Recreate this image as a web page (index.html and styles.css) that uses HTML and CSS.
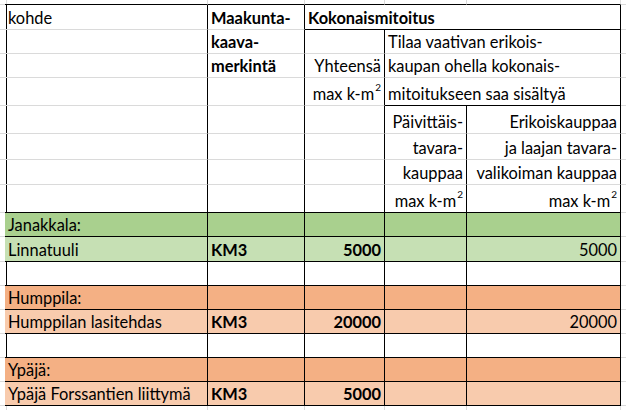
FILE: index.html
```html
<!DOCTYPE html>
<html lang="fi">
<head>
<meta charset="utf-8">
<title>Kokonaismitoitus</title>
<link rel="stylesheet" href="styles.css">
</head>
<body>
<div class="sheet">
  <!-- top stub row -->
  <div class="c"></div><div class="c bk"></div><div class="c bk"></div><div class="c bk"></div><div class="c bk"></div><div class="c bk"></div><div class="c"></div>

  <!-- header row 1 -->
  <div class="c rk"></div>
  <div class="c rk">kohde</div>
  <div class="c rk b">Maakunta-</div>
  <div class="c rk bk b s3">Kokonaismitoitus</div>
  <div class="c"></div>

  <!-- header row 2 -->
  <div class="c rk"></div>
  <div class="c rk"></div>
  <div class="c rk b">kaava-</div>
  <div class="c rk"></div>
  <div class="c rk s2">Tilaa vaativan erikois-</div>
  <div class="c"></div>

  <!-- header row 3 -->
  <div class="c rk"></div>
  <div class="c rk"></div>
  <div class="c rk b">merkintä</div>
  <div class="c rk r">Yhteensä</div>
  <div class="c rk s2">kaupan ohella kokonais-</div>
  <div class="c"></div>

  <!-- header row 4 -->
  <div class="c rk"></div>
  <div class="c rk"></div>
  <div class="c rk"></div>
  <div class="c rk r"><span>max k-m<sup class="sup">2</sup></span></div>
  <div class="c rk bk s2">mitoitukseen saa sisältyä</div>
  <div class="c"></div>

  <!-- header row 5 -->
  <div class="c rk"></div>
  <div class="c rk"></div>
  <div class="c rk"></div>
  <div class="c rk"></div>
  <div class="c rk r">Päivittäis-</div>
  <div class="c rk r">Erikoiskauppaa</div>
  <div class="c"></div>

  <!-- header row 6 -->
  <div class="c rk"></div>
  <div class="c rk"></div>
  <div class="c rk"></div>
  <div class="c rk"></div>
  <div class="c rk r">tavara-</div>
  <div class="c rk r">ja laajan tavara-</div>
  <div class="c"></div>

  <!-- header row 7 -->
  <div class="c rk"></div>
  <div class="c rk"></div>
  <div class="c rk"></div>
  <div class="c rk"></div>
  <div class="c rk r">kauppaa</div>
  <div class="c rk r">valikoiman kauppaa</div>
  <div class="c"></div>

  <!-- header row 8 -->
  <div class="c rk"></div>
  <div class="c rk bk"></div>
  <div class="c rk bk"></div>
  <div class="c rk bk"></div>
  <div class="c rk bk r"><span>max k-m<sup class="sup">2</sup></span></div>
  <div class="c rk bk r"><span>max k-m<sup class="sup">2</sup></span></div>
  <div class="c"></div>

  <!-- Janakkala -->
  <div class="c rk"></div>
  <div class="c rk bk g1">Janakkala:</div>
  <div class="c rk bk g1"></div>
  <div class="c rk bk g1"></div>
  <div class="c rk bk g1"></div>
  <div class="c rk bk g1"></div>
  <div class="c"></div>

  <div class="c rk"></div>
  <div class="c rk bk g2">Linnatuuli</div>
  <div class="c rk bk g2 b">KM3</div>
  <div class="c rk bk g2 b r">5000</div>
  <div class="c rk bk g2"></div>
  <div class="c rk bk g2 r">5000</div>
  <div class="c"></div>

  <div class="c rk"></div>
  <div class="c rk bk"></div>
  <div class="c rk bk"></div>
  <div class="c rk bk"></div>
  <div class="c rk bk"></div>
  <div class="c rk bk"></div>
  <div class="c"></div>

  <!-- Humppila -->
  <div class="c rk"></div>
  <div class="c rk bk o1">Humppila:</div>
  <div class="c rk bk o1"></div>
  <div class="c rk bk o1"></div>
  <div class="c rk bk o1"></div>
  <div class="c rk bk o1"></div>
  <div class="c"></div>

  <div class="c rk"></div>
  <div class="c rk bk o2">Humppilan lasitehdas</div>
  <div class="c rk bk o2 b">KM3</div>
  <div class="c rk bk o2 b r">20000</div>
  <div class="c rk bk o2"></div>
  <div class="c rk bk o2 r">20000</div>
  <div class="c"></div>

  <div class="c rk"></div>
  <div class="c rk bk"></div>
  <div class="c rk bk"></div>
  <div class="c rk bk"></div>
  <div class="c rk bk"></div>
  <div class="c rk bk"></div>
  <div class="c"></div>

  <!-- Ypäjä -->
  <div class="c rk"></div>
  <div class="c rk bk o1">Ypäjä:</div>
  <div class="c rk bk o1"></div>
  <div class="c rk bk o1"></div>
  <div class="c rk bk o1"></div>
  <div class="c rk bk o1"></div>
  <div class="c"></div>

  <div class="c rk"></div>
  <div class="c rk bk o2">Ypäjä Forssantien liittymä</div>
  <div class="c rk bk o2 b">KM3</div>
  <div class="c rk bk o2 b r">5000</div>
  <div class="c rk bk o2"></div>
  <div class="c rk bk o2"></div>
  <div class="c"></div>

  <!-- bottom stub row -->
  <div class="c"></div><div class="c"></div><div class="c"></div><div class="c"></div><div class="c"></div><div class="c"></div><div class="c"></div>
</div>
</body>
</html>
```

FILE: styles.css
```css
html, body {
  margin: 0;
  padding: 0;
  background: #ffffff;
}

.sheet {
  display: grid;
  grid-template-columns: 5px 203px 97px 80px 82px 154px 5px;
  grid-template-rows: 5px 25px 24px 24px 28px 28px 26px 25px 28px 24px 25px 24px 24px 24px 24px 24px 24px 5px;
  width: 626px;
  height: 410px;
  overflow: hidden;
  font-family: Lato, "Open Sans", sans-serif;
  font-size: 16.4px;
  line-height: 18px;
  color: #000;
}

.c {
  box-sizing: border-box;
  border-right: 1px solid #dadada;
  border-bottom: 1px solid #dadada;
  display: flex;
  align-items: flex-end;
  justify-content: flex-start;
  padding: 0 3px 2px 3px;
  white-space: nowrap;
  overflow: hidden;
}

.rk { border-right-color: #000; }
.bk { border-bottom-color: #000; }

.b { font-weight: 700; }
.r { justify-content: flex-end; }

.s2 { grid-column: span 2; }
.s3 { grid-column: span 3; }

.g1 { background: #a9d08e; }
.g2 { background: #c6e0b4; }
.o1 { background: #f4b084; }
.o2 { background: #f8cbad; }

.sup {
  font-size: 10px;
  line-height: 0;
  position: relative;
  top: -9px;
  vertical-align: baseline;
  margin-left: 1px;
}
```
